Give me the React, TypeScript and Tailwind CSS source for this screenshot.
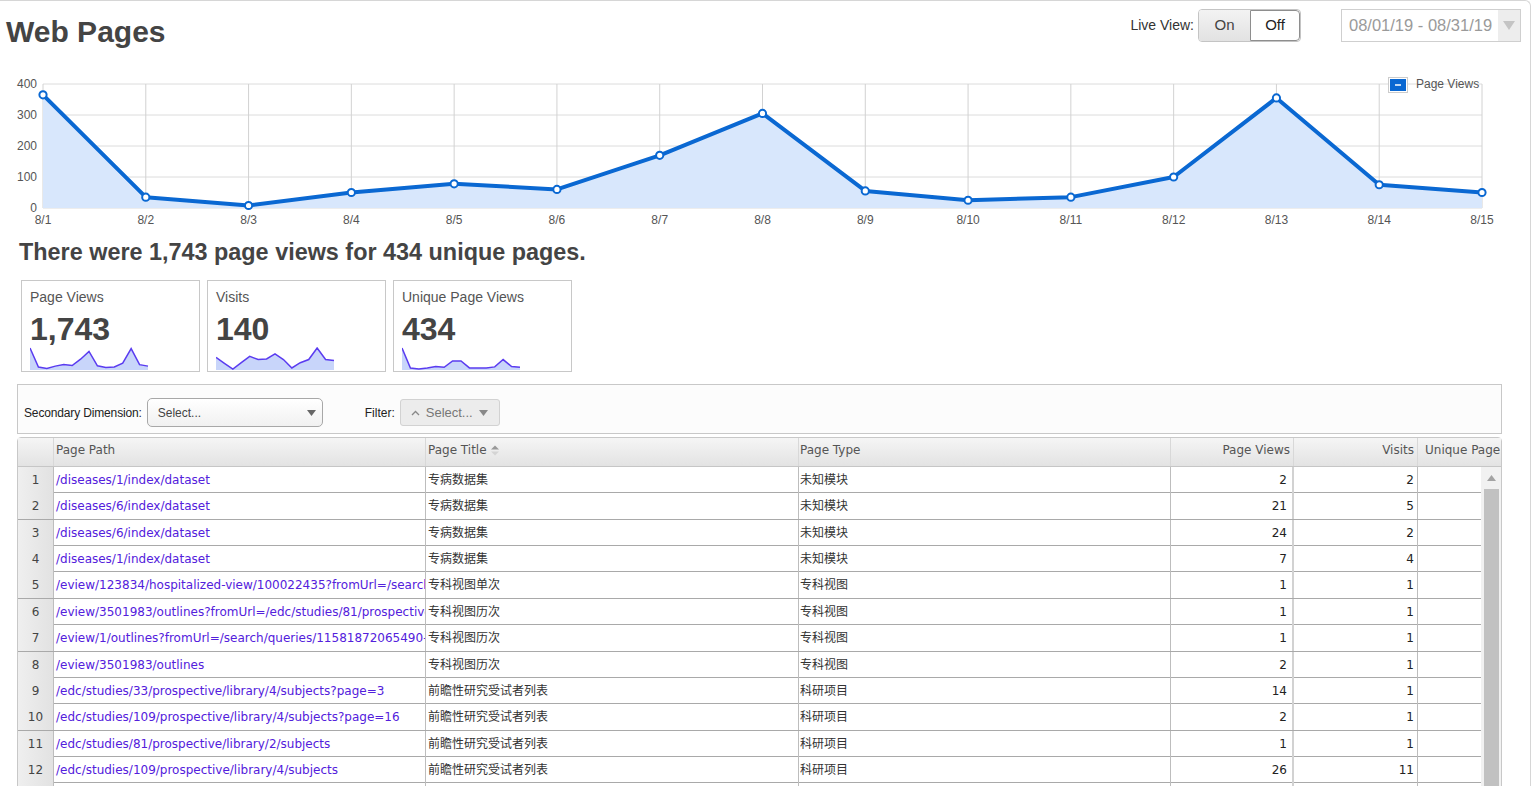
import React from 'react'

const chartData = [365, 35, 8, 50, 78, 60, 170, 305, 55, 25, 35, 100, 355, 75, 50]

const sparkViews = chartData.map((v) => v / 365)
const sparkVisits = [0.55, 0.27, 0, 0.3, 0.6, 0.45, 0.48, 0.72, 0.45, 0.05, 0.3, 0.45, 1, 0.45, 0.4]
const sparkUnique = [1, 0.05, 0, 0.05, 0.12, 0.08, 0.38, 0.38, 0.05, 0.05, 0.05, 0.1, 0.45, 0.12, 0.08]

const rows = [
  ['/diseases/1/index/dataset', '专病数据集', '未知模块', '2', '2'],
  ['/diseases/6/index/dataset', '专病数据集', '未知模块', '21', '5'],
  ['/diseases/6/index/dataset', '专病数据集', '未知模块', '24', '2'],
  ['/diseases/1/index/dataset', '专病数据集', '未知模块', '7', '4'],
  ['/eview/123834/hospitalized-view/100022435?fromUrl=/search/queries/1158', '专科视图单次', '专科视图', '1', '1'],
  ['/eview/3501983/outlines?fromUrl=/edc/studies/81/prospective/library', '专科视图历次', '专科视图', '1', '1'],
  ['/eview/1/outlines?fromUrl=/search/queries/11581872065490-1', '专科视图历次', '专科视图', '1', '1'],
  ['/eview/3501983/outlines', '专科视图历次', '专科视图', '2', '1'],
  ['/edc/studies/33/prospective/library/4/subjects?page=3', '前瞻性研究受试者列表', '科研项目', '14', '1'],
  ['/edc/studies/109/prospective/library/4/subjects?page=16', '前瞻性研究受试者列表', '科研项目', '2', '1'],
  ['/edc/studies/81/prospective/library/2/subjects', '前瞻性研究受试者列表', '科研项目', '1', '1'],
  ['/edc/studies/109/prospective/library/4/subjects', '前瞻性研究受试者列表', '科研项目', '26', '11'],
  ['/edc/studies/81/prospective/library/4/subjects', '前瞻性研究受试者列表', '科研项目', '3', '1'],
]

const cjk = { fontFamily: '"DejaVu Sans", "Noto Sans CJK SC", sans-serif' }

function TrafficChart() {
  const x0 = 43
  const dx = (1482 - 43) / 14
  const top = 13
  const bottom = 137
  const pts = chartData.map((v, i) => [x0 + i * dx, bottom - (v / 400) * (bottom - top)])
  const line = pts.map((p) => p.join(',')).join(' ')
  const area = `${x0},${bottom} ${line} ${1482},${bottom}`
  return (
    <svg width="1533" height="164" className="block" style={{ fontFamily: '"Liberation Sans", Arial, sans-serif' }}>
      {[0, 1, 2, 3, 4].map((k) => {
        const y = top + k * 31
        return (
          <g key={k}>
            <line x1={x0} x2={1482} y1={y} y2={y} stroke="#dcdcdc" strokeWidth="1" />
            <text x="37" y={y + 4} textAnchor="end" fontSize="12" fill="#555">
              {400 - k * 100}
            </text>
          </g>
        )
      })}
      {pts.map((p, i) => (
        <g key={i}>
          <line x1={p[0]} x2={p[0]} y1={top} y2={bottom} stroke="#d2d2d2" strokeWidth="1" />
          <text x={p[0]} y="153" textAnchor="middle" fontSize="12" fill="#555">
            8/{i + 1}
          </text>
        </g>
      ))}
      <polygon points={area} fill="#d8e7fc" />
      <polyline points={line} fill="none" stroke="#0a68d2" strokeWidth="4" strokeLinejoin="round" />
      {pts.map((p, i) => (
        <circle key={i} cx={p[0]} cy={p[1]} r="3.6" fill="#fff" stroke="#0a68d2" strokeWidth="2" />
      ))}
      <rect x="1388.5" y="6.5" width="19" height="15" fill="#fff" stroke="#ccc" />
      <rect x="1390" y="8" width="16" height="12" fill="#0a68d2" />
      <line x1="1395" x2="1401" y1="14" y2="14" stroke="#fff" strokeWidth="1.5" />
      <text x="1416" y="17" fontSize="12" fill="#555">
        Page Views
      </text>
    </svg>
  )
}

function Sparkline({ values }: { values: number[] }) {
  const w = 118
  const h = 23
  const pts = values.map((v, i) => [(i * w) / 14, h - 1 - v * 21])
  const line = pts.map((p) => p.join(',')).join(' ')
  return (
    <svg width={w + 2} height={h} className="block">
      <polygon points={`0,${h} ${line} ${w},${h}`} fill="#c8d5fa" />
      <polyline points={line} fill="none" stroke="#5a3cf0" strokeWidth="1.5" />
    </svg>
  )
}

function StatCard({ label, value, spark }: { label: string; value: string; spark: number[] }) {
  return (
    <div className="h-[92px] w-[179px] overflow-hidden border border-[#c8c8c8] bg-white pl-[8px] pt-[8px]">
      <div className="text-[14px] leading-[16px] text-[#555]">{label}</div>
      <div className="mt-[6px] text-[32px] font-bold leading-[36px] text-[#444]">{value}</div>
      <div>
        <Sparkline values={spark} />
      </div>
    </div>
  )
}

function Triangle({ color = '#666' }: { color?: string }) {
  return (
    <svg width="9" height="6" viewBox="0 0 9 6" className="block">
      <path d="M0 0 L9 0 L4.5 6 Z" fill={color} />
    </svg>
  )
}

const cols = 'grid grid-cols-[36px_372px_373px_372px_123px_124px_63px]'

export default function App() {
  return (
    <div
      className="relative h-[786px] w-[1531px] overflow-hidden rounded-tr-[6px] border-t border-r border-[#d6d6d6] bg-white text-[#333]"
      style={{ fontFamily: '"Liberation Sans", Arial, sans-serif' }}
    >
      {/* header */}
      <div className="flex h-[69px] items-start justify-between pr-[9px]">
        <h1 className="pl-[6px] pt-[13px] text-[30px] font-bold leading-[36px] text-[#444]">Web Pages</h1>
        <div className="mt-[8px] flex items-center">
          <span className="mr-[4px] text-[14px] text-[#333]">Live View:</span>
          <div className="flex h-[33px] overflow-hidden rounded-[4px] border border-[#c4c4c4]">
            <button className="w-[51px] bg-gradient-to-b from-[#f3f3f3] to-[#e2e2e2] text-[15px] text-[#444]">On</button>
            <button className="w-[50px] rounded-r-[4px] border border-[#8e8e8e] bg-white text-[15px] text-[#222]">Off</button>
          </div>
          <div className="ml-[40px] flex h-[33px] w-[180px] items-stretch border border-[#cfcfcf] bg-white">
            <span className="flex-1 pl-[7px] text-[16.5px] leading-[31px] text-[#9a9a9a]">08/01/19 - 08/31/19</span>
            <span className="flex w-[22px] items-center justify-center bg-[#ededed]">
              <svg width="12" height="9" viewBox="0 0 12 9">
                <path d="M0 0 L12 0 L6 9 Z" fill="#c4c4c4" />
              </svg>
            </span>
          </div>
        </div>
      </div>

      {/* chart */}
      <div className="mt-[1px]">
        <TrafficChart />
      </div>

      <h2 className="pl-[19px] pt-[3px] text-[23.4px] font-bold leading-[28px] text-[#444]">
        There were 1,743 page views for 434 unique pages.
      </h2>

      {/* stat cards */}
      <div className="mt-[14px] flex gap-[7px] pl-[21px]">
        <StatCard label="Page Views" value="1,743" spark={sparkViews} />
        <StatCard label="Visits" value="140" spark={sparkVisits} />
        <StatCard label="Unique Page Views" value="434" spark={sparkUnique} />
      </div>

      {/* filter bar */}
      <div className="ml-[17px] mt-[12px] flex h-[50px] w-[1485px] items-center border border-[#c8c8c8] bg-[#fcfcfc] pl-[6px] pt-[7px] text-[12px]">
        <span className="tracking-[-0.15px] text-[#222]">Secondary Dimension:</span>
        <div className="ml-[5px] flex h-[29px] w-[176px] items-center justify-between rounded-[5px] border border-[#a8a8a8] bg-gradient-to-b from-white to-[#f1f1f1] pl-[10px] pr-[6px]">
          <span className="text-[#444]">Select...</span>
          <Triangle color="#666" />
        </div>
        <span className="ml-[42px] text-[#222]">Filter:</span>
        <div className="ml-[5px] flex h-[27px] w-[100px] items-center gap-[6px] rounded-[3px] border border-[#d2d2d2] bg-[#ececec] pl-[10px] text-[13px] text-[#777]">
          <svg width="9" height="6" viewBox="0 0 9 6">
            <path d="M1 5 L4.5 1.5 L8 5" fill="none" stroke="#888" strokeWidth="1.3" />
          </svg>
          <span>Select...</span>
          <Triangle color="#888" />
        </div>
      </div>

      {/* table */}
      <div className="ml-[17px] mt-[3px] w-[1485px] rounded-t-[4px] border border-[#c8c8c8] text-[12px]" style={cjk}>
        <div className="grid h-[29px] grid-cols-[36px_372px_373px_372px_123px_124px_83px] border-b border-[#c6c6c6] bg-gradient-to-b from-[#f5f5f5] to-[#e3e3e3] leading-[24px] text-[#555]">
          <div className="border-r border-[#d8d8d8]" />
          <div className="border-r border-[#d8d8d8] pl-[2px]">Page Path</div>
          <div className="flex items-start gap-[4px] border-r border-[#d8d8d8] pl-[2px]">
            Page Title
            <svg width="8" height="11" viewBox="0 0 8 11" className="mt-[7px]">
              <path d="M0 4.5 L4 0.5 L8 4.5 Z" fill="#999" />
              <path d="M0 6.5 L4 10.5 L8 6.5 Z" fill="#d4d4d4" />
            </svg>
          </div>
          <div className="border-r border-[#d8d8d8] pl-[1px]">Page Type</div>
          <div className="border-r border-[#d8d8d8] pr-[3px] text-right">Page Views</div>
          <div className="border-r border-[#d8d8d8] pr-[3px] text-right">Visits</div>
          <div className="overflow-hidden whitespace-nowrap pl-[7px]">Unique Page Views</div>
        </div>
        <div className="flex">
          <div className="w-[1463px]">
            {rows.map((r, i) => (
              <div key={i} className={`${cols} h-[26.36px] border-b border-[#a9a9a9] leading-[26px]`}>
                <div className="border-r border-[#bdbdbd] bg-gradient-to-r from-[#efefef] to-[#e2e2e2] text-center text-[#444]">
                  {i + 1}
                </div>
                <div className="overflow-hidden whitespace-nowrap border-r border-[#bdbdbd] pl-[2px] text-[#5320dc]">{r[0]}</div>
                <div className="overflow-hidden whitespace-nowrap border-r border-[#bdbdbd] pl-[2px] text-[#333]">{r[1]}</div>
                <div className="overflow-hidden whitespace-nowrap border-r border-[#bdbdbd] pl-[1px] text-[#333]">{r[2]}</div>
                <div className="border-r-2 border-[#d2d2d2] pr-[5px] text-right text-[#222]">{r[3]}</div>
                <div className="border-r border-[#bdbdbd] pr-[3px] text-right text-[#222]">{r[4]}</div>
                <div />
              </div>
            ))}
          </div>
          {/* scrollbar */}
          <div className="flex w-[20px] flex-col items-center bg-[#f1f1f1]">
            <div className="flex h-[22px] items-center justify-center">
              <svg width="9" height="6" viewBox="0 0 9 6">
                <path d="M0 6 L4.5 0 L9 6 Z" fill="#a3a3a3" />
              </svg>
            </div>
            <div className="h-[400px] w-[15px] bg-[#c1c1c1]" />
          </div>
        </div>
      </div>
    </div>
  )
}
